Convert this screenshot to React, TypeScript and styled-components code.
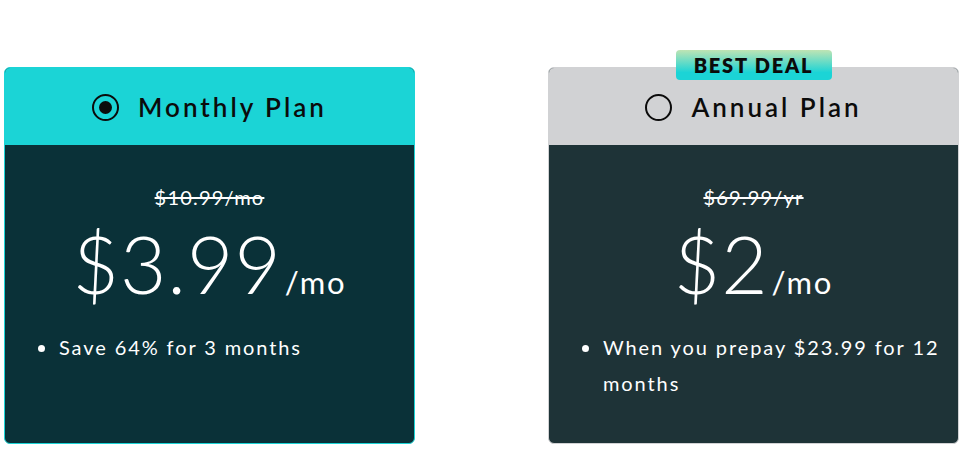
import styled, { createGlobalStyle } from 'styled-components';

const GlobalStyle = createGlobalStyle`
  body {
    margin: 0;
    background: #ffffff;
    font-family: Lato, "Noto Sans", sans-serif;
  }
`;

const Page = styled.div`
  display: flex;
  gap: 133px;
  padding: 67px 0 0 4px;
`;

const Card = styled.div<{ $selected: boolean }>`
  position: relative;
  width: 411px;
  height: 377px;
  box-sizing: border-box;
  display: flex;
  flex-direction: column;
  border: 1px solid ${(p) => (p.$selected ? '#1bd4d6' : '#d1d2d4')};
  border-radius: 6px;
  background: ${(p) => (p.$selected ? '#0a3138' : '#1e3337')};
`;

const Header = styled.div<{ $selected: boolean }>`
  height: 77px;
  flex-shrink: 0;
  display: flex;
  align-items: center;
  justify-content: center;
  gap: 19px;
  background: ${(p) => (p.$selected ? '#1bd4d6' : '#d1d2d4')};
  border-radius: 5px 5px 0 0;
  color: #0b0b0b;
  font-size: 26px;
  font-weight: 600;
  letter-spacing: 3px;
  padding: 1px 0 0 0;
  box-sizing: border-box;
`;

const Radio = styled.span<{ $checked: boolean }>`
  width: 27px;
  height: 27px;
  box-sizing: border-box;
  border: 2px solid #0b0b0b;
  border-radius: 50%;
  display: flex;
  align-items: center;
  justify-content: center;

  &::after {
    content: '';
    display: ${(p) => (p.$checked ? 'block' : 'none')};
    width: 13px;
    height: 13px;
    border-radius: 50%;
    background: #0b0b0b;
  }
`;

const Badge = styled.div`
  position: absolute;
  top: -18px;
  left: 50%;
  transform: translateX(-50%);
  width: 156px;
  height: 30px;
  border-radius: 4px;
  background: linear-gradient(180deg, #bfe4b4 0%, #1bd4d6 75%);
  display: flex;
  align-items: center;
  justify-content: center;
  font-size: 20px;
  font-weight: 800;
  letter-spacing: 1.8px;
  color: #0b0b0b;
`;

const Body = styled.div`
  display: flex;
  flex-direction: column;
  align-items: center;
  padding: 40px 14px 0;
  color: #ffffff;
`;

const OldPrice = styled.div`
  font-size: 20px;
  line-height: 24px;
  letter-spacing: 1.2px;
  text-decoration: line-through;
  text-decoration-thickness: 2px;
`;

const PriceRow = styled.div`
  display: flex;
  align-items: baseline;
  margin-top: 14px;
  line-height: 1;
`;

const Amount = styled.span`
  font-size: 80px;
  font-weight: 300;
  letter-spacing: 1px;
`;

const Unit = styled.span`
  font-size: 31px;
  font-weight: 400;
  margin-left: 3px;
  letter-spacing: 1.8px;
`;

const Points = styled.ul`
  align-self: stretch;
  margin: 26px 0 0 20px;
  padding-left: 20px;
  font-size: 20px;
  line-height: 36px;
  letter-spacing: 1.9px;

  li::marker {
    font-size: 22px;
  }
`;

const plans = [
  {
    name: 'Monthly Plan',
    selected: true,
    badge: false,
    old: '$10.99/mo',
    amount: '$3.99',
    note: 'Save 64% for 3 months',
  },
  {
    name: 'Annual Plan',
    selected: false,
    badge: true,
    old: '$69.99/yr',
    amount: '$2',
    note: 'When you prepay $23.99 for 12 months',
  },
];

export default function App() {
  return (
    <>
      <GlobalStyle />
      <Page>
        {plans.map((plan) => (
          <Card key={plan.name} $selected={plan.selected}>
            {plan.badge && <Badge>BEST DEAL</Badge>}
            <Header $selected={plan.selected}>
              <Radio $checked={plan.selected} />
              {plan.name}
            </Header>
            <Body>
              <OldPrice>{plan.old}</OldPrice>
              <PriceRow>
                <Amount>{plan.amount}</Amount>
                <Unit>/mo</Unit>
              </PriceRow>
              <Points>
                <li>{plan.note}</li>
              </Points>
            </Body>
          </Card>
        ))}
      </Page>
    </>
  );
}
